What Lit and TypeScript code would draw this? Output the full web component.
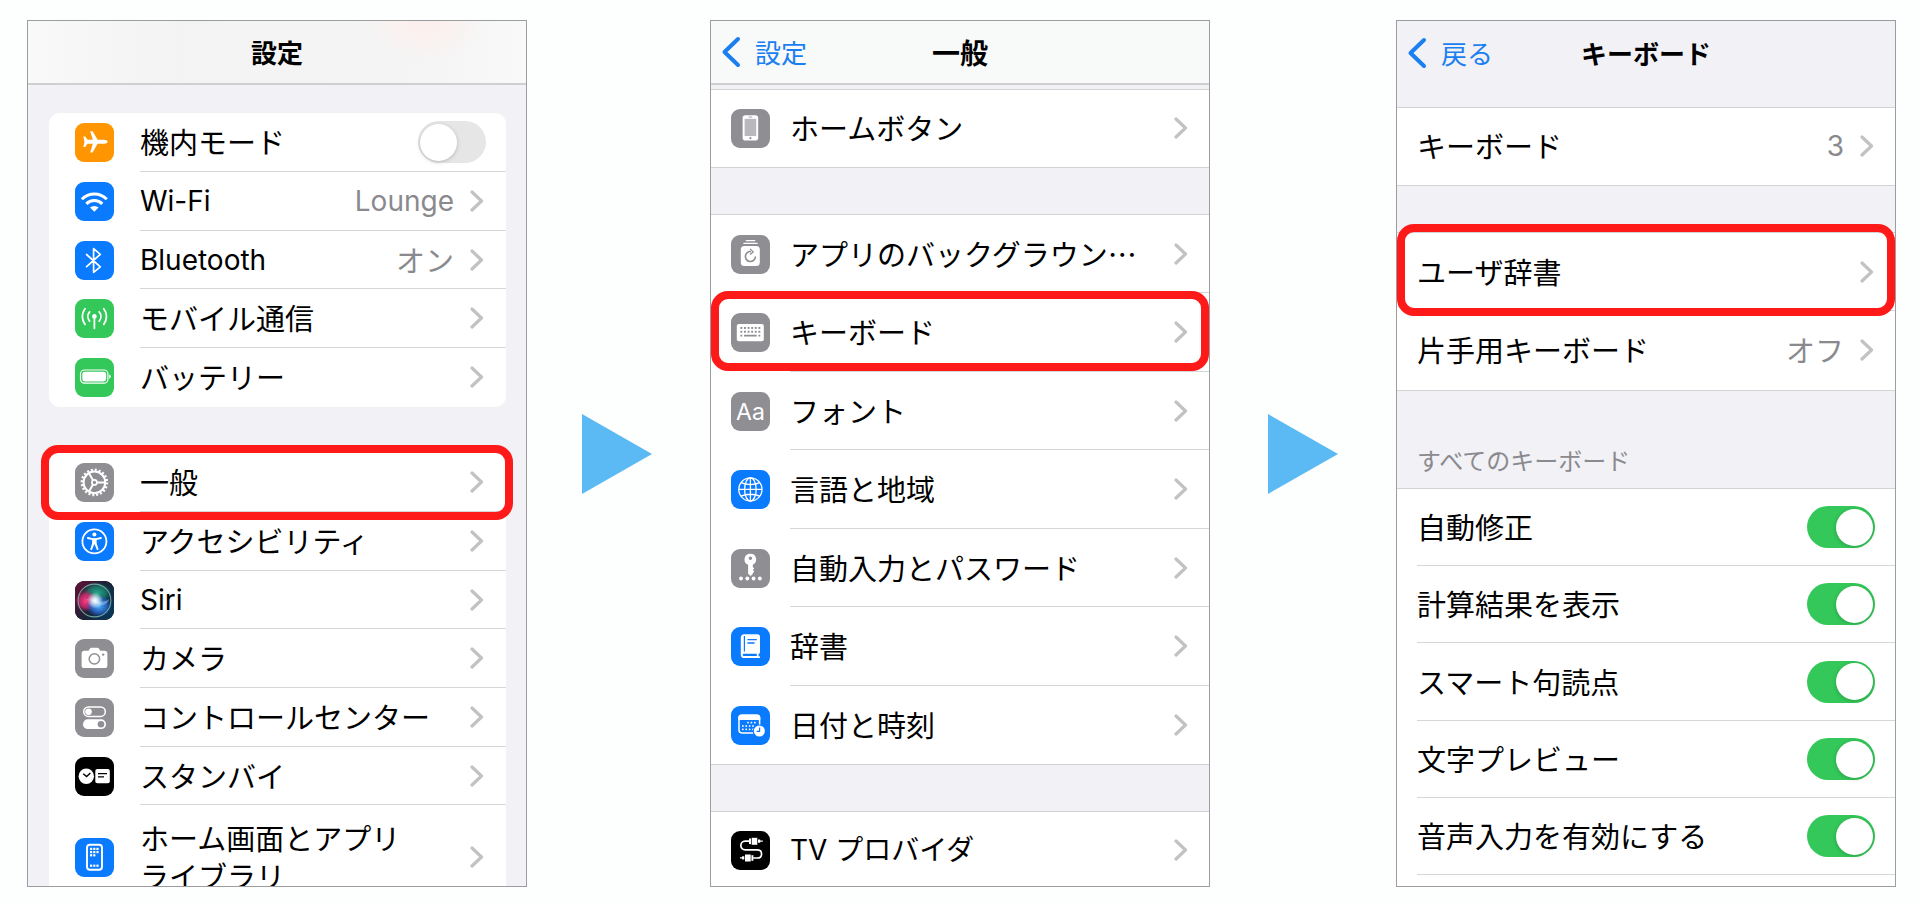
import { LitElement, html, svg, css, nothing, TemplateResult, SVGTemplateResult } from "lit";
import { customElement, property } from "lit/decorators.js";
import { classMap } from "lit/directives/class-map.js";

type Tone = "orange" | "blue" | "green" | "gray" | "black";

interface Icon {
  tone: Tone;
  art: SVGTemplateResult;
}

const dots = (xs: number[], ys: number[], size: number, fill: string) =>
  ys.map((y) => xs.map((x) => svg`<rect x=${x} y=${y} width=${size} height=${size} fill=${fill} />`));

const ICONS: Record<string, Icon> = {
  airplane: {
    tone: "orange",
    art: svg`<path fill="#fff" d="M32.6 18.8c0-1.2-1.6-2-3.6-2h-6.4L17.6 8.2h-2.4l2.6 8.6h-5.2l-2.4-3.2H8.3l1.2 5.2-1.2 5.2h1.9l2.4-3.2h5.2l-2.6 8.6h2.4l5-8.6H29c2 0 3.6-.8 3.6-2z"/>`,
  },
  wifi: {
    tone: "blue",
    art: svg`<g fill="none" stroke="#fff" stroke-width="3"><path d="M6.8 17.2a17.8 17.8 0 0 1 25 0"/><path d="M11.3 21.8a11.6 11.6 0 0 1 16 0"/></g><path fill="#fff" d="M15 25.5a6.6 6.6 0 0 1 8.6 0l-4.3 4.2z"/>`,
  },
  bluetooth: {
    tone: "blue",
    art: svg`<path fill="none" stroke="#fff" stroke-width="1.7" stroke-linejoin="round" stroke-linecap="round" d="M11.6 13.5l13.7 12.3-6.7 5.5V7.7l6.7 5.6-13.7 12.4"/>`,
  },
  antenna: {
    tone: "green",
    art: svg`<g fill="none" stroke="#fff" stroke-width="1.8" stroke-linecap="round"><path d="M10 9.8a12.8 12.8 0 0 0 0 15.6M28.8 9.8a12.8 12.8 0 0 1 0 15.6M14.6 12.9a7.2 7.2 0 0 0 0 9.2M24.2 12.9a7.2 7.2 0 0 1 0 9.2M19.4 18v11.3"/></g><circle cx="19.4" cy="17.4" r="2.3" fill="#fff"/>`,
  },
  battery: {
    tone: "green",
    art: svg`<rect x="5.5" y="12" width="27.4" height="13.2" rx="4" fill="none" stroke="#fff" stroke-width="1.2"/><rect x="7.3" y="13.8" width="23.8" height="9.6" rx="2.4" fill="#fff"/><path fill="#fff" d="M34.2 16.4c1 .4 1.6 1.2 1.6 2.2s-.6 1.8-1.6 2.2z"/>`,
  },
  gear: {
    tone: "gray",
    art: svg`<g fill="none" stroke="#fff"><circle cx="19.4" cy="19.4" r="12.6" stroke-width="2.4" stroke-dasharray="2 1.958"/><circle cx="19.4" cy="19.4" r="10.8" stroke-width="2"/><circle cx="19.4" cy="19.4" r="2.5" stroke-width="1.7"/><path stroke-width="2" d="M22 19.4h8M18 17.2l-4-7M18 21.6l-4 7"/></g>`,
  },
  accessibility: {
    tone: "blue",
    art: svg`<circle cx="19.4" cy="19.4" r="12" fill="none" stroke="#fff" stroke-width="1.8"/><circle cx="19.4" cy="12.5" r="2" fill="#fff"/><path fill="none" stroke="#fff" stroke-width="1.9" stroke-linecap="round" stroke-linejoin="round" d="M12.9 16l4.6 1.1h3.8l4.6-1.1"/><path fill="#fff" d="M17.2 16.6h4.4l.1 5 1.7 5.4c.2.6-.2 1-.6 1.1-.5.1-.9-.1-1.1-.6l-2-5h-.6l-2 5c-.2.5-.6.7-1.1.6-.4-.1-.8-.5-.6-1.1l1.7-5.4z"/>`,
  },
  siri: {
    tone: "black",
    art: svg`<defs>
      <linearGradient id="back" x1="0" y1="0.2" x2="1" y2="0.8"><stop offset="0" stop-color="#5c1236"/><stop offset=".5" stop-color="#1c2236"/><stop offset="1" stop-color="#06385a"/></linearGradient>
      <radialGradient id="pink"><stop offset="0" stop-color="#ff3f86"/><stop offset=".6" stop-color="#d8296f" stop-opacity=".75"/><stop offset="1" stop-color="#b01a5a" stop-opacity="0"/></radialGradient>
      <radialGradient id="teal"><stop offset="0" stop-color="#2aa98c"/><stop offset=".6" stop-color="#17806f" stop-opacity=".8"/><stop offset="1" stop-color="#0a5e58" stop-opacity="0"/></radialGradient>
      <radialGradient id="azure"><stop offset="0" stop-color="#52b4ff"/><stop offset=".6" stop-color="#2a70d8" stop-opacity=".75"/><stop offset="1" stop-color="#1f58c8" stop-opacity="0"/></radialGradient>
      <radialGradient id="glow"><stop offset="0" stop-color="#fff"/><stop offset=".35" stop-color="#e8f6ff" stop-opacity=".85"/><stop offset="1" stop-color="#fff" stop-opacity="0"/></radialGradient></defs>
      <rect width="39" height="39" rx="9" fill="url(#back)"/>
      <ellipse cx="22" cy="12" rx="15" ry="11" fill="url(#teal)"/>
      <ellipse cx="11" cy="20" rx="11" ry="11" fill="url(#pink)"/>
      <ellipse cx="24" cy="25" rx="13" ry="11" fill="url(#azure)"/>
      <circle cx="19.5" cy="19.5" r="16.4" fill="none" stroke="#7fbdb4" stroke-width="1.1" opacity=".8"/>
      <path d="M4 22c6-6 11-4 15.5-2.500s10 2 15-1.500c-3 7-9 8-15 3s-11-3-15.500 1z" fill="#bfe9ff" opacity=".4"/>
      <circle cx="20" cy="19.500" r="8" fill="url(#glow)"/>`,
  },
  camera: {
    tone: "gray",
    art: svg`<path fill="#fff" d="M9.300 11.700h4.200l1.300-2c.4-.6.900-.9 1.700-.9h5.800c.8 0 1.300.3 1.700.9l1.300 2h4.400c1.700 0 2.700 1 2.700 2.700v12c0 1.700-1 2.700-2.700 2.700H9.300c-1.700 0-2.700-1-2.700-2.700v-12c0-1.700 1-2.700 2.700-2.700z"/><circle cx="19.400" cy="19.900" r="5.200" fill="none" stroke="#8e8e93" stroke-width="1.500"/><circle cx="28.200" cy="15.600" r="1.200" fill="#8e8e93"/>`,
  },
  control: {
    tone: "gray",
    art: svg`<rect x="8.700" y="9" width="21.600" height="9.400" rx="4.700" fill="none" stroke="#fff" stroke-width="1.500"/><circle cx="13.500" cy="13.700" r="3.300" fill="#fff"/><rect x="8" y="21.300" width="23" height="9.800" rx="4.900" fill="#fff"/><circle cx="26" cy="26.200" r="3.300" fill="#8e8e93"/>`,
  },
  standby: {
    tone: "black",
    art: svg`<circle cx="11.300" cy="19.200" r="7.700" fill="#fff"/><path d="M8.200 16.700l3.400 2.800 3.800-3.600" fill="none" stroke="#000" stroke-width="1.400"/><rect x="20.300" y="12.100" width="14.500" height="14.200" rx="2" fill="#fff"/><path d="M23 16.600h9M23 19.800h6" stroke="#000" stroke-width="1.300"/>`,
  },
  home: {
    tone: "blue",
    art: svg`<rect x="12" y="6.800" width="15" height="25" rx="3" fill="none" stroke="#fff" stroke-width="1.900"/>${dots([15, 18.2, 21.4], [9.8, 13], 2.2, "#fff")}${dots([15, 18.2], [16.2], 2.2, "#fff")}${dots([15, 18.2, 21.4], [26.6], 2.2, "#fff")}`,
  },
  phone: {
    tone: "gray",
    art: svg`<rect x="11.600" y="6.300" width="15.600" height="25.200" rx="2.800" fill="#fff"/><rect x="13.600" y="9.800" width="11.600" height="17.200" fill="#b9b9bd"/><circle cx="19.400" cy="29.200" r="1.100" fill="#8e8e93"/><path d="M17.600 8h3.600" stroke="#8e8e93" stroke-width=".8"/>`,
  },
  refresh: {
    tone: "gray",
    art: svg`<path d="M14.800 5.700h9.400M12.400 8.300h14.200" stroke="#fff" stroke-width="1.200"/><rect x="9.800" y="11" width="19" height="20" rx="3.500" fill="#fff"/><path d="M20 16.600a5 5 0 1 0 4.400 5" fill="none" stroke="#8e8e93" stroke-width="1.600"/><path d="M19 13.900l3.200 3-3.200 2.600" fill="none" stroke="#8e8e93" stroke-width="1.300"/>`,
  },
  keyboard: {
    tone: "gray",
    art: svg`<rect x="5.800" y="10.900" width="27" height="17.400" rx="2" fill="#fff"/>${dots([9.4, 13, 16.6, 20.2, 23.8, 27.4], [14, 17.8], 1.9, "#8e8e93")}<path d="M9.400 22.600h1.900M13 22.600h12.700M27.400 22.600h1.900" stroke="#8e8e93" stroke-width="1.800"/>`,
  },
  fonts: {
    tone: "gray",
    art: svg`<text x="19.500" y="27.500" text-anchor="middle" font-family="Inter, sans-serif" font-size="23" fill="#fff">Aa</text>`,
  },
  globe: {
    tone: "blue",
    art: svg`<g fill="none" stroke="#fff" stroke-width="1.300"><circle cx="19.400" cy="19.400" r="11.600"/><ellipse cx="19.400" cy="19.400" rx="5.800" ry="11.600"/><path d="M19.400 7.800V31M7.800 19.400H31M10 12.700c5 2.500 13.800 2.500 18.800 0M10 26.100c5-2.500 13.800-2.500 18.800 0"/></g>`,
  },
  key: {
    tone: "gray",
    art: svg`<path fill="#fff" fill-rule="evenodd" d="M19.400 4.800a5.700 5.700 0 0 1 2.400 10.900v2.200l1.500 1.500-1.500 1.500 1.500 1.500-1.500 1.600v.9L19.600 27l-2.500-2.200v-9a5.700 5.700 0 0 1 2.300-11zm0 2.700a1.700 1.700 0 1 0 0 3.400 1.700 1.700 0 0 0 0-3.400z"/><g fill="#fff"><circle cx="10" cy="29.500" r="1.900"/><circle cx="16.300" cy="29.500" r="1.900"/><circle cx="22.600" cy="29.500" r="1.900"/><circle cx="28.900" cy="29.500" r="1.900"/></g>`,
  },
  book: {
    tone: "blue",
    art: svg`<path fill="#fff" d="M13.200 7.300h13.300c1.600 0 2.500.9 2.500 2.500v15.400c0 .9-.6 1.400-1.400 1.600v2.500h.6c.6 0 .9.400.9.900s-.4.900-.9.900H13.100c-2 0-3.300-1.300-3.300-3.200V10.700c0-2.100 1.300-3.400 3.400-3.400z"/><path d="M13.400 9v15.600" stroke="#0a7aff" stroke-width="1.200"/><path d="M13.200 26.700h12.600v2.400H13.200c-1.900 0-1.900-2.400 0-2.400z" fill="#0a7aff"/><path d="M16.400 12.700h9.400M16.400 16h7.200" stroke="#0a7aff" stroke-width="1.300"/>`,
  },
  calendar: {
    tone: "blue",
    art: svg`<rect x="8" y="9.300" width="20.600" height="17.600" rx="2.800" fill="none" stroke="#fff" stroke-width="1.500"/><path fill="#fff" d="M7.300 14V11.500c0-2 1.200-3 3.200-3h15.600c2 0 3.200 1 3.200 3V14z"/>${dots([16.2, 19.6, 23], [15.8], 1.6, "#fff")}${dots([11, 14.4, 17.8, 21.2], [19.2, 22.6], 1.6, "#fff")}<circle cx="28.400" cy="25" r="6.600" fill="#0a7aff"/><circle cx="28.400" cy="25" r="5.500" fill="#fff"/><path d="M28.600 21.500v3.900h-3" fill="none" stroke="#0a7aff" stroke-width="1.200"/>`,
  },
  cable: {
    tone: "black",
    art: svg`<path d="M18.500 10.200h-4.300c-5.800 0-5.800 8.600 0 8.600h12c5.800 0 5.800 8.200 0 8.200h-4" fill="none" stroke="#fff" stroke-width="1.700"/><g fill="#fff"><rect x="18" y="7.500" width="2" height="5.600"/><rect x="20.700" y="6.800" width="5.600" height="7"/><path d="M27 8.600h2.200v1h2.600v1.200h-2.600v1H27z"/><rect x="20.400" y="24.200" width="2" height="5.600"/><rect x="14" y="23.500" width="5.700" height="7"/><path d="M13.300 25.300h-2.200v1H9v1.200h2.100v1h2.200z"/></g>`,
  },
};

const forward = html`<svg class="forward" viewBox="0 0 14 22" width="14" height="22" aria-hidden="true"><path d="M2 2l9.500 9L2 20" fill="none" stroke="currentColor" stroke-width="3.200" stroke-linecap="round" stroke-linejoin="round"/></svg>`;

@customElement("settings-row")
class SettingsRow extends LitElement {
  @property() icon = "";
  @property() label = "";
  @property() value = "";
  @property() script: "ja" | "latin" | "mixed" = "ja";
  @property() control: "link" | "switch" = "link";
  @property({ type: Boolean }) on = false;
  @property({ type: Boolean, reflect: true }) marked = false;

  static styles = css`
    :host {
      display: block;
      position: relative;
      height: var(--row-height, 78px);
      box-sizing: border-box;
    }
    .row {
      display: flex;
      height: 100%;
      padding-left: var(--row-start, 20px);
      color: #000;
      font: 400 29px/38px "Noto Sans CJK JP", sans-serif;
      text-decoration: none;
    }
    .icon {
      flex: none;
      align-self: center;
      width: 39px;
      height: 39px;
      margin-right: var(--icon-gap, 20px);
      border-radius: 9px;
      overflow: hidden;
    }
    .orange { background: #ff9500; }
    .blue { background: #0a7aff; }
    .green { background: #34c759; }
    .gray { background: #8e8e93; }
    .black { background: #000; }
    .body {
      flex: 1;
      min-width: 0;
      display: flex;
      align-items: center;
      padding-right: var(--row-end, 22px);
      border-bottom: 1px solid #d6d6d9;
    }
    .switched {
      padding-right: 20px;
    }
    :host(:last-child) .body {
      border-bottom-color: var(--last-line, transparent);
    }
    .label {
      flex: 1;
      min-width: 0;
      padding-bottom: 2px;
      white-space: pre-line;
    }
    .value {
      margin-right: 16px;
      padding-bottom: 2px;
      color: #8a8a8e;
    }
    .latin {
      padding-bottom: 0;
      font-family: Inter, sans-serif;
      font-size: 28px;
    }
    .mixed {
      padding-bottom: 0;
      font-family: Inter, "Noto Sans CJK JP", sans-serif;
      font-size: 28px;
    }
    .forward {
      flex: none;
      color: #c2c2c5;
    }
    .toggle {
      appearance: none;
      flex: none;
      display: flex;
      align-items: center;
      width: 68px;
      height: 42px;
      margin: 0;
      padding: 0 2px;
      border-radius: 21px;
      background: #e6e6e7;
    }
    .toggle::before {
      content: "";
      width: 37px;
      height: 37px;
      border-radius: 50%;
      background: #fff;
      box-shadow: 0 1px 4px rgba(0, 0, 0, 0.2);
    }
    .toggle:checked {
      justify-content: flex-end;
      background: #34c759;
    }
    .mark {
      position: absolute;
      inset: var(--mark-inset, 0);
      border: 8px solid #ff1a1a;
      border-radius: 17px;
      pointer-events: none;
      z-index: 1;
    }
  `;

  private renderIcon(): TemplateResult | typeof nothing {
    const icon = ICONS[this.icon];
    if (!icon) return nothing;
    return html`<svg class="icon ${icon.tone}" viewBox="0 0 39 39" aria-hidden="true">${icon.art}</svg>`;
  }

  render() {
    const labelClass = classMap({ label: true, latin: this.script === "latin", mixed: this.script === "mixed" });
    const valueClass = classMap({ value: true, latin: /^[\x20-\x7e]+$/.test(this.value) });
    if (this.control === "switch") {
      return html`<label class="row">
        ${this.renderIcon()}
        <span class="body switched"><span class=${labelClass}>${this.label}</span><input class="toggle" type="checkbox" role="switch" .checked=${this.on} /></span>
      </label>`;
    }
    return html`<a class="row" href="#">
        ${this.renderIcon()}
        <span class="body"><span class=${labelClass}>${this.label}</span>${this.value ? html`<span class=${valueClass}>${this.value}</span>` : nothing}${forward}</span>
      </a>
      ${this.marked ? html`<span class="mark"></span>` : nothing}`;
  }
}

@customElement("app-root")
class AppRoot extends LitElement {
  static styles = css`
    :host {
      display: block;
      font-family: "Noto Sans CJK JP", sans-serif;
    }
    .steps {
      display: grid;
      grid-template-columns: 500fr 183fr 500fr 186fr 500fr;
      box-sizing: border-box;
      height: 100vh;
      padding: 20px 24px 18px 27px;
      background: #fdfffe;
    }
    .screen {
      min-width: 0;
      overflow: hidden;
      border: 1px solid #9d9d9f;
      background: #f1f1f6;
    }
    .arrow {
      place-self: center end;
      width: 70px;
      height: 80px;
      margin-right: 58px;
      color: #5bb9f3;
    }
    .bar {
      display: grid;
      grid-template-columns: 1fr auto 1fr;
      align-items: center;
      box-sizing: border-box;
      height: 64px;
      padding: 0 10px;
    }
    .lined {
      border-bottom: 2px solid #cfcfd2;
      background: #f8f9f9;
    }
    .tinted {
      background: radial-gradient(ellipse 60px 40px at 80% 0, #fdeeec, transparent), linear-gradient(90deg, #f9f9f9, #f3f3f3 30%, #f5f5f5 80%, #f9f9f9);
    }
    .title {
      grid-column: 2;
      margin: 0;
      font-size: 26px;
      font-weight: 700;
      line-height: 38px;
    }
    .large {
      font-size: 28px;
    }
    .back {
      display: flex;
      align-items: center;
      gap: 14px;
      color: #1a7ff0;
      font-size: 26px;
      line-height: 38px;
      text-decoration: none;
    }
    .card {
      --row-start: 26px;
      --icon-gap: 26px;
      margin: 28px 20px 0 21px;
      border-radius: 11px;
      background: #fff;
    }
    .card + .card {
      margin-top: 46px;
    }
    .card settings-row {
      --row-height: 59px;
    }
    .card settings-row:nth-child(3n) {
      --row-height: 58px;
    }
    .card settings-row.tall {
      --row-height: 105px;
    }
    .card settings-row[marked] {
      --mark-inset: -8px -7px -8px -8px;
    }
    .list {
      --row-end: 21px;
      margin-bottom: 47px;
      border-top: 1px solid #d3d3d6;
      box-shadow: 0 1px #d3d3d6;
      background: #fff;
    }
    .list settings-row:nth-child(even) {
      --row-height: 79px;
    }
    .list settings-row:only-child {
      --row-height: 77px;
    }
    .list settings-row[marked] {
      --mark-inset: -2px 0 1px 0;
    }
    .under {
      margin-top: 4px;
    }
    .below {
      margin-top: 22px;
    }
    .loose settings-row[marked] {
      --mark-inset: -9px 0 -5px 0;
    }
    .caption {
      margin: 0;
      padding: 4px 20px 9px;
      color: #8a8a8e;
      font-size: 24px;
      font-weight: 400;
      line-height: 38px;
    }
    .toggles {
      --last-line: #d6d6d9;
      height: 100vh;
    }
    .toggles settings-row,
    .toggles settings-row:nth-child(even) {
      --row-height: 77px;
    }
    .toggles settings-row:nth-child(3n) {
      --row-height: 78px;
    }
  `;

  private arrow() {
    return html`<svg class="arrow" viewBox="0 0 70 80" aria-hidden="true"><path d="M0 0l70 40L0 80z" fill="currentColor"/></svg>`;
  }

  private back(label: string) {
    return html`<a class="back" href="#"><svg viewBox="0 0 20 32" width="20" height="32" aria-hidden="true"><path d="M17 3L3.500 16 17 29" fill="none" stroke="currentColor" stroke-width="4" stroke-linecap="round" stroke-linejoin="round"/></svg>${label}</a>`;
  }

  render() {
    return html`
      <main class="steps">
        <section class="screen">
          <header class="bar lined tinted"><h2 class="title">設定</h2></header>
          <div class="card">
            <settings-row icon="airplane" label="機内モード" control="switch"></settings-row>
            <settings-row icon="wifi" label="Wi-Fi" script="latin" value="Lounge"></settings-row>
            <settings-row icon="bluetooth" label="Bluetooth" script="latin" value="オン"></settings-row>
            <settings-row icon="antenna" label="モバイル通信"></settings-row>
            <settings-row icon="battery" label="バッテリー"></settings-row>
          </div>
          <div class="card">
            <settings-row icon="gear" label="一般" marked></settings-row>
            <settings-row icon="accessibility" label="アクセシビリティ"></settings-row>
            <settings-row icon="siri" label="Siri" script="latin"></settings-row>
            <settings-row icon="camera" label="カメラ"></settings-row>
            <settings-row icon="control" label="コントロールセンター"></settings-row>
            <settings-row icon="standby" label="スタンバイ"></settings-row>
            <settings-row class="tall" icon="home" .label=${"ホーム画面とアプリ\nライブラリ"}></settings-row>
          </div>
        </section>

        ${this.arrow()}

        <section class="screen">
          <header class="bar lined">${this.back("設定")}<h2 class="title large">一般</h2></header>
          <div class="list under">
            <settings-row icon="phone" label="ホームボタン"></settings-row>
          </div>
          <div class="list">
            <settings-row icon="refresh" label="アプリのバックグラウン…"></settings-row>
            <settings-row icon="keyboard" label="キーボード" marked></settings-row>
            <settings-row icon="fonts" label="フォント"></settings-row>
            <settings-row icon="globe" label="言語と地域"></settings-row>
            <settings-row icon="key" label="自動入力とパスワード"></settings-row>
            <settings-row icon="book" label="辞書"></settings-row>
            <settings-row icon="calendar" label="日付と時刻"></settings-row>
          </div>
          <div class="list">
            <settings-row icon="cable" label="TV プロバイダ" script="mixed"></settings-row>
          </div>
        </section>

        ${this.arrow()}

        <section class="screen">
          <header class="bar">${this.back("戻る")}<h2 class="title">キーボード</h2></header>
          <div class="list below">
            <settings-row label="キーボード" value="3"></settings-row>
          </div>
          <div class="list loose">
            <settings-row label="ユーザ辞書" marked></settings-row>
            <settings-row label="片手用キーボード" value="オフ"></settings-row>
          </div>
          <h3 class="caption">すべてのキーボード</h3>
          <div class="list toggles">
            <settings-row label="自動修正" control="switch" on></settings-row>
            <settings-row label="計算結果を表示" control="switch" on></settings-row>
            <settings-row label="スマート句読点" control="switch" on></settings-row>
            <settings-row label="文字プレビュー" control="switch" on></settings-row>
            <settings-row label="音声入力を有効にする" control="switch" on></settings-row>
          </div>
        </section>
      </main>
    `;
  }
}
